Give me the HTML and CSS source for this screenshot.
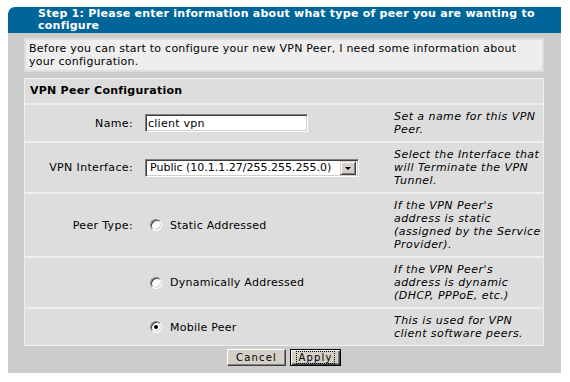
FILE: index.html
```html
<!DOCTYPE html>
<html>
<head>
<meta charset="utf-8">
<title>VPN Peer Wizard</title>
<link rel="stylesheet" href="styles.css">
</head>
<body>
<div class="wizard">
  <div class="wizard-head">Step 1: Please enter information about what type of peer you are wanting to<br>configure</div>
  <div class="wizard-body">
    <div class="intro">Before you can start to configure your new VPN Peer, I need some information about<br>your configuration.</div>
    <div class="config">
      <div class="config-title">VPN Peer Configuration</div>
      <div class="row">
        <div class="lbl">Name:</div>
        <div class="ctl"><input class="text" type="text" value="client vpn"></div>
        <div class="desc">Set a name for this VPN<br>Peer.</div>
      </div>
      <div class="row">
        <div class="lbl">VPN Interface:</div>
        <div class="ctl">
          <div class="select"><span class="select-val">Public (10.1.1.27/255.255.255.0)</span><span class="select-btn"><span class="arrow"></span></span></div>
        </div>
        <div class="desc">Select the Interface that<br>will Terminate the VPN<br>Tunnel.</div>
      </div>
      <div class="row">
        <div class="lbl">Peer Type:</div>
        <div class="ctl"><label class="choice"><span class="radio"></span>Static Addressed</label></div>
        <div class="desc">If the VPN Peer's<br>address is static<br>(assigned by the Service<br>Provider).</div>
      </div>
      <div class="row">
        <div class="lbl"></div>
        <div class="ctl"><label class="choice"><span class="radio"></span>Dynamically Addressed</label></div>
        <div class="desc">If the VPN Peer's<br>address is dynamic<br>(DHCP, PPPoE, etc.)</div>
      </div>
      <div class="row">
        <div class="lbl"></div>
        <div class="ctl"><label class="choice"><span class="radio checked"></span>Mobile Peer</label></div>
        <div class="desc">This is used for VPN<br>client software peers.</div>
      </div>
    </div>
    <div class="actions">
      <button class="btn btn-cancel" type="button">Cancel</button>
      <button class="btn btn-default" type="button"><span class="focus">Apply</span></button>
    </div>
  </div>
</div>
</body>
</html>
```

FILE: styles.css
```css
html, body {
  margin: 0;
  background: #fff;
}
body {
  padding: 7px 9px 0 8px;
  font-family: "DejaVu Sans", Verdana, sans-serif;
  font-size: 11px;
  letter-spacing: 0.25px;
  color: #000;
}
.wizard {
  width: 553px;
}
.wizard-head {
  background: #006699;
  color: #fff;
  font-weight: bold;
  line-height: 12px;
  padding: 1px 0 1px 30px;
  border-top-left-radius: 7px;
  white-space: nowrap;
}
.wizard-body {
  background: #cccccc;
  padding: 5px 17px 7px 16px;
}
.intro {
  background: #eeeeee;
  border: 2px solid #dddddd;
  padding: 2px 3px;
  line-height: 13px;
  white-space: nowrap;
}
.config {
  margin-top: 6px;
  background: #dddddd;
  border: 1px solid #eeeeee;
}
.config-title {
  font-weight: bold;
  line-height: 12px;
  padding: 6px 5px;
}
.row {
  display: grid;
  grid-template-columns: 116px 249px 1fr;
  align-items: center;
  border-top: 2px solid #eeeeee;
  padding: 5px 0 5px;
}
.lbl {
  text-align: right;
  padding-right: 8px;
  letter-spacing: 0.35px;
  white-space: nowrap;
}
.ctl {
  padding-left: 4px;
}
.desc {
  padding-left: 4px;
  font-style: italic;
  line-height: 13px;
  letter-spacing: 0.45px;
  white-space: nowrap;
}
.text {
  box-sizing: border-box;
  width: 163px;
  height: 18px;
  margin: 0;
  padding: 1px 2px;
  font: 11px "DejaVu Sans", Verdana, sans-serif;
  letter-spacing: 0.25px;
  color: #000;
  background: #fff;
  border: 1px solid;
  border-color: #808080 #ffffff #ffffff #808080;
  box-shadow: inset 1px 1px 0 #404040, inset -1px -1px 0 #d4d0c8;
  outline: none;
}
.select {
  box-sizing: border-box;
  width: 214px;
  height: 18px;
  display: flex;
  align-items: center;
  background: #fff;
  border: 1px solid;
  border-color: #808080 #ffffff #ffffff #808080;
  box-shadow: inset 1px 1px 0 #404040, inset -1px -1px 0 #d4d0c8;
  padding: 2px;
}
.select-val {
  flex: 1;
  padding-left: 2px;
  letter-spacing: 0;
  white-space: nowrap;
  overflow: hidden;
}
.select-btn {
  box-sizing: border-box;
  width: 16px;
  height: 14px;
  flex: none;
  background: #d4d0c8;
  border: 1px solid;
  border-color: #d4d0c8 #404040 #404040 #d4d0c8;
  box-shadow: inset 1px 1px 0 #ffffff, inset -1px -1px 0 #808080;
  display: flex;
  align-items: center;
  justify-content: center;
}
.arrow {
  width: 0;
  height: 0;
  border-left: 3px solid transparent;
  border-right: 3px solid transparent;
  border-top: 3px solid #000;
  margin-top: 1px;
}
.choice {
  display: flex;
  align-items: center;
  gap: 8px;
  padding-left: 5px;
  white-space: nowrap;
}
.radio {
  box-sizing: border-box;
  width: 12px;
  height: 12px;
  border-radius: 50%;
  background: #fff;
  border: 1px solid;
  border-color: #808080 #ffffff #ffffff #808080;
  box-shadow: inset 1px 1px 0 #404040, inset -1px -1px 0 #d4d0c8;
  position: relative;
  flex: none;
}
.radio.checked::after {
  content: "";
  position: absolute;
  left: 3px;
  top: 3px;
  width: 4px;
  height: 4px;
  border-radius: 50%;
  background: #000;
}
.actions {
  margin-top: 3px;
  display: flex;
  justify-content: center;
  gap: 4px;
}
.btn {
  box-sizing: border-box;
  margin: 0;
  padding: 0;
  height: 17px;
  font: 10px "DejaVu Sans", Verdana, sans-serif;
  letter-spacing: 1.2px;
  color: #000;
  background: #d4d0c8;
  border: 1px solid;
  border-color: #ffffff #404040 #404040 #ffffff;
  box-shadow: inset -1px -1px 0 #808080;
}
.btn-cancel {
  width: 59px;
}
.btn-default {
  width: 51px;
  border: 1px solid #000;
  box-shadow: inset 1px 1px 0 #ffffff, inset -1px -1px 0 #404040, inset -2px -2px 0 #808080;
}
.focus {
  display: inline-block;
  border: 1px dotted #000;
  padding: 0 1px;
  line-height: 11px;
}
```
